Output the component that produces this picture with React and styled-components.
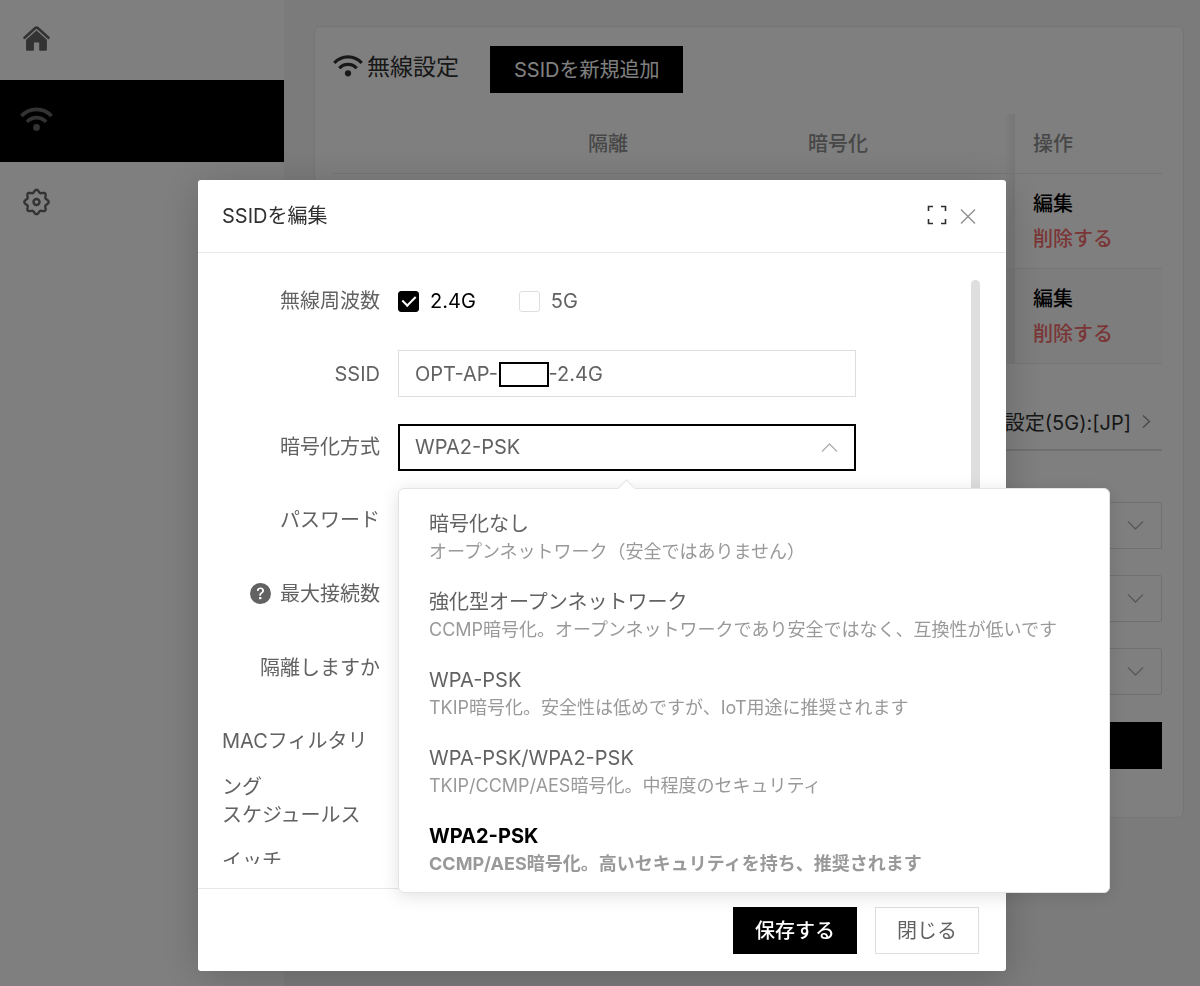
import { useState } from 'react'
import styled, { createGlobalStyle } from 'styled-components'
import { BsQuestionCircleFill } from 'react-icons/bs'

const color = {
  primary: '#000000',
  title: '#303030',
  text: '#626262',
  muted: '#8f8f8f',
  icon: '#666666',
  border: '#dedede',
  line: '#ebebeb',
  danger: '#f56c6c',
}

const GlobalStyle = createGlobalStyle`
  * {
    box-sizing: border-box;
  }
  body {
    margin: 0;
    background-color: #f6f6f6;
    color: ${color.text};
    font-family: Inter, 'Noto Sans CJK JP', sans-serif;
    font-size: 20px;
  }
  button, input, select {
    font: inherit;
    color: inherit;
  }
`

// Page
const Layout = styled.div`
  display: grid;
  grid-template-columns: 284px 1fr;
  min-height: 100vh;
`
const Sidebar = styled.nav`
  background-color: #ffffff;
`
const MenuLink = styled.a`
  display: flex;
  align-items: center;
  height: ${({ $active }) => ($active ? 82 : 80)}px;
  padding-left: 20px;
  color: ${color.icon};
  background-color: ${({ $active }) => ($active ? color.primary : '#ffffff')};
`
const Main = styled.main`
  padding: 26px 16px 26px 30px;
`
const Card = styled.section`
  padding: 19px 21px 48px 18px;
  border: 1px solid ${color.line};
  border-radius: 6px;
  background-color: #ffffff;
`
const CardHeader = styled.div`
  display: flex;
  align-items: flex-start;
  gap: 31px;
`
const CardTitle = styled.h1`
  display: flex;
  align-items: center;
  gap: 4px;
  margin: 0;
  color: ${color.title};
  font-size: 23px;
  font-weight: 400;
  line-height: 42px;
`
const Button = styled.button`
  display: block;
  height: 47px;
  padding: 0 ${({ $wide }) => ($wide ? 23 : 21)}px;
  border: 1px solid ${({ $plain }) => ($plain ? color.border : color.primary)};
  color: ${({ $plain }) => ($plain ? color.text : '#ffffff')};
  background-color: ${({ $plain }) => ($plain ? '#ffffff' : color.primary)};
  font-weight: ${({ $strong }) => ($strong ? 500 : 400)};
  line-height: 30px;
  cursor: pointer;
`
const Table = styled.table`
  width: 100%;
  margin-top: 21px;
  border-collapse: collapse;
  table-layout: fixed;
`
const HeadCell = styled.th`
  height: 59px;
  padding: 0 20px 1px;
  border-bottom: 1px solid ${color.line};
  color: ${color.muted};
  font-weight: 500;
  text-align: left;
`
const Cell = styled.td`
  height: 95px;
  padding: 13px 20px 11px;
  border-bottom: 1px solid ${color.line};
  background-color: ${({ $striped }) => ($striped ? '#fafafa' : '#ffffff')};
`
const stickyShade = `
  padding-left: 30px;
  background-image: linear-gradient(to right, rgba(0, 0, 0, 0), rgba(0, 0, 0, 0.07));
  background-size: 12px 100%;
  background-repeat: no-repeat;
`
const ActionHead = styled(HeadCell)`
  ${stickyShade}
`
const ActionCell = styled(Cell)`
  ${stickyShade}
`
const TextButton = styled.button`
  display: block;
  padding: 0;
  border: 0;
  background: none;
  color: ${({ $danger }) => ($danger ? color.danger : color.primary)};
  font-weight: 500;
  line-height: 35px;
  cursor: pointer;
`
const CountryLink = styled.a`
  display: flex;
  align-items: center;
  justify-content: flex-end;
  gap: 7px;
  height: 57px;
  margin-top: 30px;
  padding-right: 7px;
  border-bottom: 2px solid ${color.border};
  color: ${color.title};
  text-decoration: none;
  & > svg {
    color: ${color.muted};
  }
`
const SettingList = styled.div`
  display: flex;
  flex-direction: column;
  gap: 26px;
  margin: 51px 0 27px;
`
const SelectBox = styled.div`
  display: grid;
  align-items: center;
  width: 100%;
  & > * {
    grid-area: 1 / 1;
  }
  & > svg {
    justify-self: end;
    margin-right: 18px;
    color: #b0b0b0;
    pointer-events: none;
  }
`
const Select = styled.select`
  width: 100%;
  height: 47px;
  padding: 0 16px;
  border: 1px solid ${color.border};
  border-radius: 2px;
  background-color: #ffffff;
  appearance: none;
`
const FullButton = styled(Button)`
  width: 100%;
`

// Dialog
const Overlay = styled.div`
  position: fixed;
  inset: 0;
  padding: 180px 194px 15px 198px;
  background-color: rgba(0, 0, 0, 0.5);
`
const Dialog = styled.div`
  position: relative;
  border-radius: 3px;
  background-color: #ffffff;
  box-shadow: 0 6px 40px rgba(0, 0, 0, 0.2);
`
const DialogHeader = styled.header`
  display: flex;
  align-items: center;
  justify-content: space-between;
  height: 73px;
  padding: 0 30px 3px 24px;
  border-bottom: 1px solid #e8e8e8;
`
const DialogTitle = styled.h2`
  margin: 0;
  color: ${color.title};
  font-size: 20px;
  font-weight: 400;
`
const HeaderIcons = styled.div`
  display: flex;
  align-items: center;
  gap: 13px;
`
const IconButton = styled.button`
  display: flex;
  padding: 0;
  border: 0;
  background: none;
  color: ${({ $light }) => ($light ? color.muted : color.title)};
  cursor: pointer;
`
const DialogBody = styled.div`
  display: flex;
  justify-content: space-between;
  height: calc(100vh - 351px);
  padding: 24px 26px 24px 24px;
`
const Form = styled.form`
  flex: 0 1 634px;
  overflow: hidden;
`
const Scrollbar = styled.div`
  width: 9px;
  margin-top: 3px;
  border-radius: 5px;
  background-color: #dedede;
`
const RowGroup = styled.div`
  display: flex;
  flex-direction: column;
  gap: ${({ $gap }) => $gap}px;
  margin-bottom: 27px;
`
const Row = styled.div`
  display: grid;
  grid-template-columns: 158px 1fr;
  column-gap: 18px;
  height: 47px;
`
const Label = styled.label`
  line-height: ${({ $wrapped }) => ($wrapped ? 46 : 48)}px;
  text-align: ${({ $wrapped }) => ($wrapped ? 'left' : 'right')};
  white-space: ${({ $wrapped }) => ($wrapped ? 'normal' : 'nowrap')};
  & > svg {
    width: 21px;
    height: 21px;
    margin-right: 9px;
    vertical-align: -3px;
  }
`
const CheckGroup = styled.div`
  display: flex;
  align-items: center;
  gap: 43px;
`
const CheckLabel = styled.label`
  display: flex;
  align-items: center;
  gap: 11px;
  color: ${({ $checked }) => ($checked ? color.primary : color.text)};
`
const Checkbox = styled.input`
  display: grid;
  place-items: center;
  width: 21px;
  height: 21px;
  margin: 0;
  border: 1px solid ${color.border};
  border-radius: 3px;
  background-color: #ffffff;
  appearance: none;
  &:checked {
    border-color: ${color.primary};
    background-color: ${color.primary};
  }
  &:checked::after {
    content: '';
    width: 6px;
    height: 11px;
    margin-bottom: 3px;
    border: solid #ffffff;
    border-width: 0 2px 2px 0;
    transform: rotate(45deg);
  }
`
const TextField = styled.div`
  position: relative;
`
const TextInput = styled.input`
  width: 100%;
  height: 47px;
  padding: 0 16px;
  border: 1px solid ${color.border};
  background-color: #ffffff;
`
const Mask = styled.span`
  position: absolute;
  top: 12px;
  left: 101px;
  width: 50px;
  height: 25px;
  border: 2px solid #000000;
  background-color: #ffffff;
`
const ActiveSelect = styled(Select)`
  border: 2px solid ${color.primary};
  border-radius: 0;
  padding: 0 15px;
`
const DialogFooter = styled.footer`
  display: flex;
  justify-content: flex-end;
  gap: 18px;
  padding: 18px 27px 17px;
  border-top: 1px solid #e8e8e8;
`
const Popup = styled.ul`
  position: absolute;
  top: 308px;
  left: 200px;
  width: max-content;
  margin: 0;
  padding: 10px 0 3px;
  border: 1px solid #e4e4e4;
  border-radius: 6px;
  background-color: #ffffff;
  box-shadow: 0 3px 18px rgba(0, 0, 0, 0.12);
  list-style: none;
  &::before {
    content: '';
    position: absolute;
    top: -7px;
    left: 221px;
    width: 12px;
    height: 12px;
    border: solid #e4e4e4;
    border-width: 1px 0 0 1px;
    background-color: #ffffff;
    transform: rotate(45deg);
  }
`
const Option = styled.li`
  padding: 11px 52px 11px 30px;
  line-height: 28px;
  color: ${({ $selected }) => ($selected ? color.primary : color.text)};
  font-weight: ${({ $selected }) => ($selected ? 700 : 400)};
  cursor: pointer;
`
const OptionNote = styled.div`
  color: #999999;
  font-size: 18px;
`

// Icons
function HomeIcon() {
  return (
    <svg width="33" height="32" viewBox="0 0 33 32">
      <path
        d="M4.500 13.800 15 4.300a2.300 2.300 0 0 1 3 0l10.500 9.500"
        fill="none"
        stroke="currentColor"
        strokeWidth="2.600"
        strokeLinecap="round"
      />
      <path
        d="M16.500 6.900 26.400 15.700v10.500h-6.700v-8.200h-6.200v8.200h-7v-10.500z"
        fill="currentColor"
        stroke="currentColor"
        strokeWidth="0.900"
        strokeLinejoin="round"
      />
    </svg>
  )
}

function WifiIcon({ width = 30 }) {
  return (
    <svg width={width} height={Math.round(width * 0.9)} viewBox="0 0 30 27">
      <g fill="none" stroke="currentColor" strokeWidth="3.200">
        <path d="M1.300 9a18.500 18.500 0 0 1 27.400 0" />
        <path d="M6.300 14.300a11.700 11.700 0 0 1 17.400 0" />
      </g>
      <circle cx="15" cy="19.300" r="3.100" fill="currentColor" />
    </svg>
  )
}

// Outline with eight rounded teeth
const gearOutline = Array.from({ length: 96 }, (_, index) => {
  const angle = (index / 96) * Math.PI * 2
  const radius = 10.9 + 1.3 * Math.cos(angle * 8)
  const x = (16.5 + radius * Math.cos(angle)).toFixed(2)
  const y = (14 + radius * Math.sin(angle)).toFixed(2)
  return `${x},${y}`
}).join(' ')

function GearIcon() {
  return (
    <svg width="33" height="28" viewBox="0 0 33 28">
      <g fill="none" stroke="currentColor" strokeWidth="2.400">
        <polygon points={gearOutline} strokeLinejoin="round" />
        <circle cx="16.500" cy="14" r="3" />
      </g>
    </svg>
  )
}

function Chevron({ direction }) {
  const paths = {
    up: 'M1 12.500 8.500 5 16 12.500',
    down: 'M1 4.500 8.500 12 16 4.500',
    right: 'M5 2.500 11.500 8.500 5 14.500',
  }
  return (
    <svg width="17" height="17" viewBox="0 0 17 17">
      <path
        d={paths[direction]}
        fill="none"
        stroke="currentColor"
        strokeWidth="1.300"
      />
    </svg>
  )
}

function FullscreenIcon() {
  return (
    <svg width="20" height="20" viewBox="0 0 20 20">
      <path
        d="M1.500 6V1.500H6M14 1.500h4.500V6M18.500 14v4.500H14M6 18.500H1.500V14"
        fill="none"
        stroke="currentColor"
        strokeWidth="1.600"
      />
    </svg>
  )
}

function CloseIcon() {
  return (
    <svg width="16" height="18" viewBox="0 0 16 18">
      <path
        d="M1 3.500 15 17.500M15 3.500 1 17.500"
        fill="none"
        stroke="currentColor"
        strokeWidth="1.400"
      />
    </svg>
  )
}

// Data
const encryptions = [
  {
    name: '暗号化なし',
    note: 'オープンネットワーク（安全ではありません）',
  },
  {
    name: '強化型オープンネットワーク',
    note: 'CCMP暗号化。オープンネットワークであり安全ではなく、互換性が低いです',
  },
  {
    name: 'WPA-PSK',
    note: 'TKIP暗号化。安全性は低めですが、IoT用途に推奨されます',
  },
  {
    name: 'WPA-PSK/WPA2-PSK',
    note: 'TKIP/CCMP/AES暗号化。中程度のセキュリティ',
  },
  {
    name: 'WPA2-PSK',
    note: 'CCMP/AES暗号化。高いセキュリティを持ち、推奨されます',
  },
]
const radioSettings = ['channel', 'bandwidth', 'power']

// Components
function WirelessCard() {
  return (
    <Card>
      <CardHeader>
        <CardTitle>
          <WifiIcon />
          無線設定
        </CardTitle>
        <Button type="button" $wide>
          SSIDを新規追加
        </Button>
      </CardHeader>
      <Table>
        <colgroup>
          <col />
          <col width="220" />
          <col width="215" />
          <col width="159" />
        </colgroup>
        <thead>
          <tr>
            <HeadCell />
            <HeadCell>隔離</HeadCell>
            <HeadCell>暗号化</HeadCell>
            <ActionHead>操作</ActionHead>
          </tr>
        </thead>
        <tbody>
          {[false, true].map((striped) => (
            <tr key={`row-${striped}`}>
              <Cell $striped={striped} />
              <Cell $striped={striped} />
              <Cell $striped={striped} />
              <ActionCell $striped={striped}>
                <TextButton type="button">編集</TextButton>
                <TextButton type="button" $danger>
                  削除する
                </TextButton>
              </ActionCell>
            </tr>
          ))}
        </tbody>
      </Table>
      <CountryLink href="#country">
        国コード設定(5G):[JP]
        <Chevron direction="right" />
      </CountryLink>
      <SettingList>
        {radioSettings.map((name) => (
          <SelectBox key={name}>
            <Select aria-label={name} />
            <Chevron direction="down" />
          </SelectBox>
        ))}
      </SettingList>
      <FullButton type="button" aria-label="保存する" />
    </Card>
  )
}

function SsidDialog() {
  const [bands, setBands] = useState({ '2.4G': true, '5G': false })
  const [ssid, setSsid] = useState('OPT-AP-         -2.4G')
  const [encryption, setEncryption] = useState('WPA2-PSK')

  return (
    <Dialog role="dialog" aria-labelledby="dialog-title">
      <DialogHeader>
        <DialogTitle id="dialog-title">SSIDを編集</DialogTitle>
        <HeaderIcons>
          <IconButton type="button" aria-label="全画面">
            <FullscreenIcon />
          </IconButton>
          <IconButton type="button" aria-label="閉じる" $light>
            <CloseIcon />
          </IconButton>
        </HeaderIcons>
      </DialogHeader>
      <DialogBody>
        <Form>
          <RowGroup $gap={26}>
            <Row>
              <Label as="span">無線周波数</Label>
              <CheckGroup>
                {Object.keys(bands).map((band) => (
                  <CheckLabel key={band} $checked={bands[band]}>
                    <Checkbox
                      type="checkbox"
                      checked={bands[band]}
                      onChange={() =>
                        setBands({ ...bands, [band]: !bands[band] })
                      }
                    />
                    {band}
                  </CheckLabel>
                ))}
              </CheckGroup>
            </Row>
            <Row>
              <Label htmlFor="ssid">SSID</Label>
              <TextField>
                <TextInput
                  id="ssid"
                  value={ssid}
                  onChange={(e) => setSsid(e.target.value)}
                />
                <Mask />
              </TextField>
            </Row>
            <Row>
              <Label htmlFor="encryption">暗号化方式</Label>
              <SelectBox>
                <ActiveSelect
                  id="encryption"
                  value={encryption}
                  onChange={(e) => setEncryption(e.target.value)}
                >
                  {encryptions.map(({ name }) => (
                    <option key={name}>{name}</option>
                  ))}
                </ActiveSelect>
                <Chevron direction="up" />
              </SelectBox>
            </Row>
            <Row>
              <Label as="span">パスワード</Label>
            </Row>
          </RowGroup>
          <RowGroup $gap={27}>
            <Row>
              <Label as="span">
                <BsQuestionCircleFill />
                最大接続数
              </Label>
            </Row>
            <Row>
              <Label as="span">隔離しますか</Label>
            </Row>
            <Row>
              <Label as="span" $wrapped>
                MACフィルタリング
              </Label>
            </Row>
            <Row>
              <Label as="span" $wrapped>
                スケジュールスイッチ
              </Label>
            </Row>
          </RowGroup>
        </Form>
        <Scrollbar />
      </DialogBody>
      <DialogFooter>
        <Button type="button" $strong>
          保存する
        </Button>
        <Button type="button" $plain>
          閉じる
        </Button>
      </DialogFooter>
      <Popup role="listbox" aria-label="暗号化方式">
        {encryptions.map(({ name, note }) => (
          <Option
            key={name}
            role="option"
            aria-selected={name === encryption}
            $selected={name === encryption}
            onClick={() => setEncryption(name)}
          >
            {name}
            <OptionNote>{note}</OptionNote>
          </Option>
        ))}
      </Popup>
    </Dialog>
  )
}

function App() {
  return (
    <>
      <GlobalStyle />
      <Layout>
        <Sidebar>
          <MenuLink href="#home" aria-label="ホーム">
            <HomeIcon />
          </MenuLink>
          <MenuLink href="#wireless" aria-label="無線設定" $active>
            <WifiIcon width={33} />
          </MenuLink>
          <MenuLink href="#system" aria-label="設定">
            <GearIcon />
          </MenuLink>
        </Sidebar>
        <Main>
          <WirelessCard />
        </Main>
      </Layout>
      <Overlay>
        <SsidDialog />
      </Overlay>
    </>
  )
}

export default App
